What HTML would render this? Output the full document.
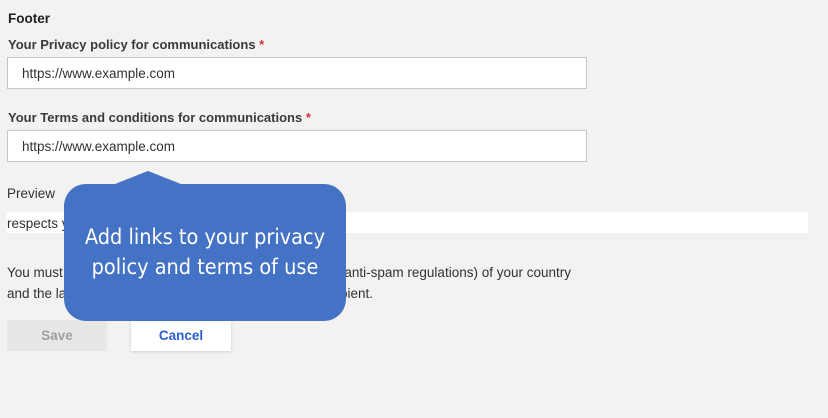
<!DOCTYPE html>
<html><head><style>
body{margin:0;width:828px;height:418px;background:#f3f2f1;font-family:"Liberation Sans",sans-serif;position:relative;overflow:hidden;color:#323130}
.a{position:absolute;white-space:nowrap}
.lbl{font-size:13px;font-weight:bold;color:#3b3a39}
.req{color:#d13438}
.inp{position:absolute;left:7px;width:578px;height:30px;background:#fff;border:1px solid #c8c6c4}
.inp span{position:absolute;left:14px;top:8px;font-size:13.5px;color:#323130}
</style></head><body>
<div class="a" style="left:8px;top:11px;font-size:13.5px;font-weight:bold;color:#201f1e">Footer</div>
<div class="a lbl" style="left:8px;top:37px">Your Privacy policy for communications <span class="req">*</span></div>
<div class="inp" style="top:57px"><span>https://www.example.com</span></div>
<div class="a lbl" style="left:8px;top:110px">Your Terms and conditions for communications <span class="req">*</span></div>
<div class="inp" style="top:130px"><span>https://www.example.com</span></div>
<div class="a" style="left:7px;top:186px;font-size:13.5px">Preview</div>
<div class="a" style="left:7px;top:212px;width:801px;height:21px;background:#fff"></div>
<div class="a" style="left:7px;top:216px;font-size:13.5px">respects y</div>
<div class="a" style="left:7px;top:265px;font-size:13.5px">You must</div>
<div class="a" style="left:7px;top:286px;font-size:13.5px">and the la</div>
<div class="a" style="right:257px;top:265px;font-size:13.5px">anti-spam regulations) of your country</div>
<div class="a" style="right:455px;top:286px;font-size:13.5px">recipient.</div>
<div class="a" style="left:7px;top:320px;width:100px;height:31px;background:#e8e7e6;color:#a19f9d;font-size:13.5px;font-weight:bold;text-align:center;line-height:31px">Save</div>
<div class="a" style="left:131px;top:321px;width:100px;height:30px;background:#fff;box-shadow:0 1px 3px rgba(0,0,0,.15);color:#2b5fce;font-size:13.5px;font-weight:bold;text-align:center;line-height:30px">Cancel</div>
<svg class="a" style="left:0;top:0" width="828" height="418"><polygon points="110,186 148,171 186,186" fill="#4472c4"/><rect x="64" y="184" width="282" height="137" rx="22" fill="#4472c4"/></svg>
<div class="a" style="left:64px;top:223px;width:282px;text-align:center;color:#fff;font-size:21.5px;line-height:30px;font-family:'DejaVu Sans Condensed','Liberation Sans',sans-serif;white-space:normal">Add links to your privacy<br>policy and terms of use</div>
</body></html>
